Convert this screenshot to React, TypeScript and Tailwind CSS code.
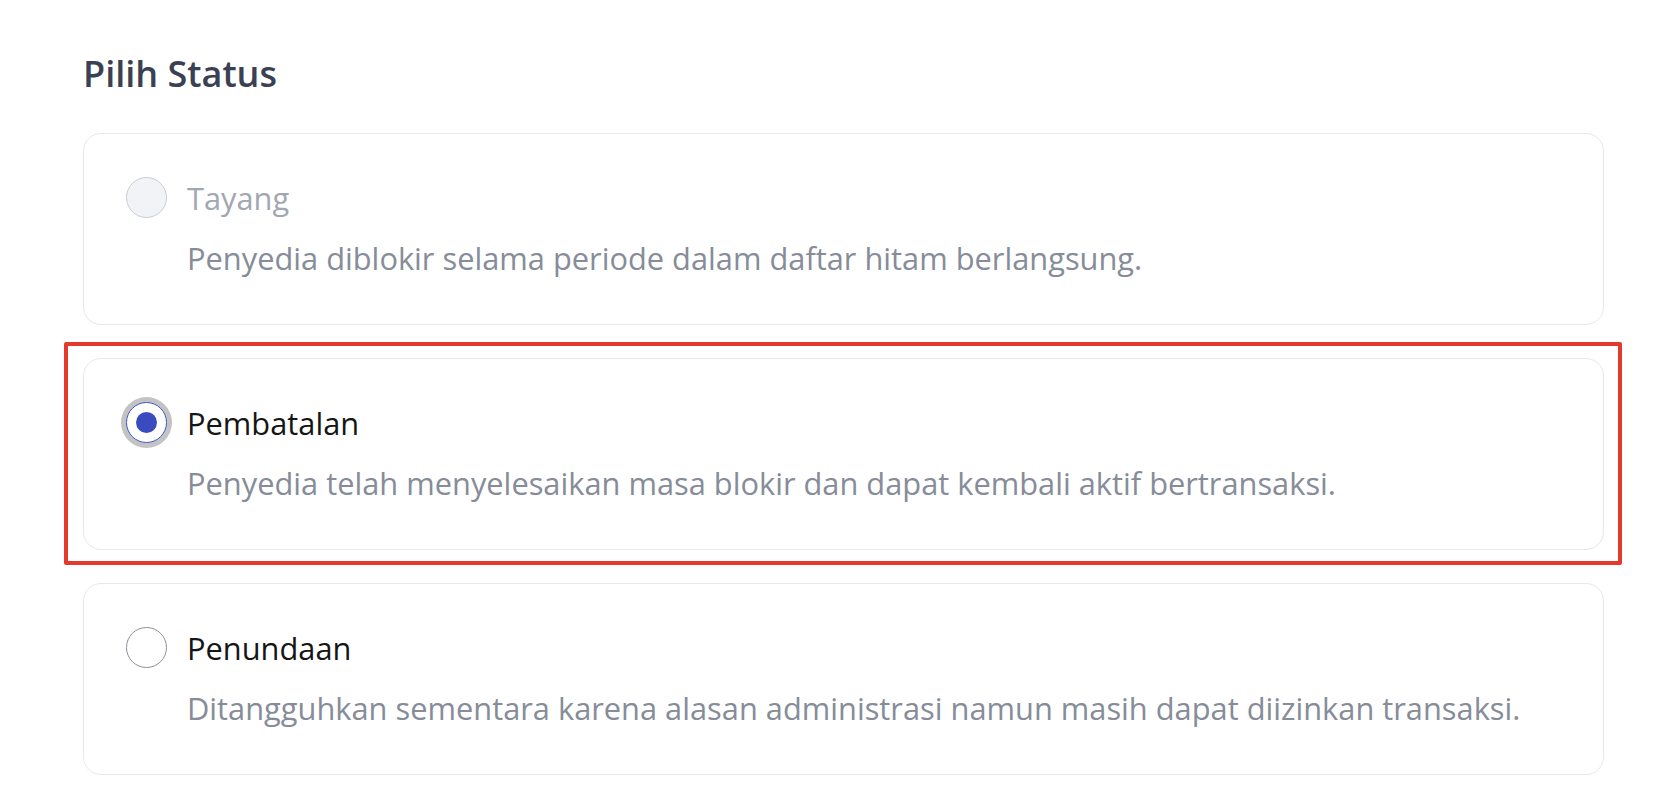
import React from "react";

type Opt = { label: string; desc: string; state: "disabled" | "selected" | "normal" };

const options: Opt[] = [
  { label: "Tayang", desc: "Penyedia diblokir selama periode dalam daftar hitam berlangsung.", state: "disabled" },
  { label: "Pembatalan", desc: "Penyedia telah menyelesaikan masa blokir dan dapat kembali aktif bertransaksi.", state: "selected" },
  { label: "Penundaan", desc: "Ditangguhkan sementara karena alasan administrasi namun masih dapat diizinkan transaksi.", state: "normal" },
];

function Radio({ state }: { state: Opt["state"] }) {
  if (state === "selected") {
    return (
      <span className="flex h-[41px] w-[41px] shrink-0 items-center justify-center rounded-full border-[1.5px] border-[#4455c9] bg-white shadow-[0_0_0_5px_#c3c3c3]">
        <span className="h-[21px] w-[21px] rounded-full bg-[#3a4bbf]" />
      </span>
    );
  }
  if (state === "disabled") {
    return <span className="h-[41px] w-[41px] shrink-0 rounded-full border-[1.5px] border-[#c9ccd3] bg-[#f2f3f7]" />;
  }
  return <span className="h-[41px] w-[41px] shrink-0 rounded-full border-[1.5px] border-[#8b9099] bg-white" />;
}

function Card({ o }: { o: Opt }) {
  return (
    <div className="relative">
      {o.state === "selected" && (
        <div className="pointer-events-none absolute -bottom-[15px] -left-[19px] -right-[18px] -top-[16px] rounded-[2px] border-4 border-[#e5392d]" />
      )}
      <div className="rounded-[18px] border border-[#e8e8eb] bg-white pb-[46px] pl-[42px] pr-[42px] pt-[43px]">
        <div className="flex items-center gap-[20px]">
          <Radio state={o.state} />
          <span
            className={
              "text-[30.8px] leading-[40px] " +
              (o.state === "disabled" ? "text-[#a2a7b2]" : "text-[#151515]")
            }
          >
            {o.label}
          </span>
        </div>
        <p className="mt-[20px] pl-[61px] text-[30.8px] leading-[40px] text-[#868c99]">{o.desc}</p>
      </div>
    </div>
  );
}

export default function App() {
  return (
    <div
      className="min-h-[808px] w-full bg-white pl-[83px] pr-[74px] pt-[50px]"
      style={{ fontFamily: '"Open Sans", "Noto Sans", sans-serif' }}
    >
      <h2 className="text-[36px] font-semibold leading-[48px] text-[#394152]">Pilih Status</h2>
      <div className="mt-[35px] flex flex-col gap-[33px]">
        {options.map((o) => (
          <Card key={o.label} o={o} />
        ))}
      </div>
    </div>
  );
}
